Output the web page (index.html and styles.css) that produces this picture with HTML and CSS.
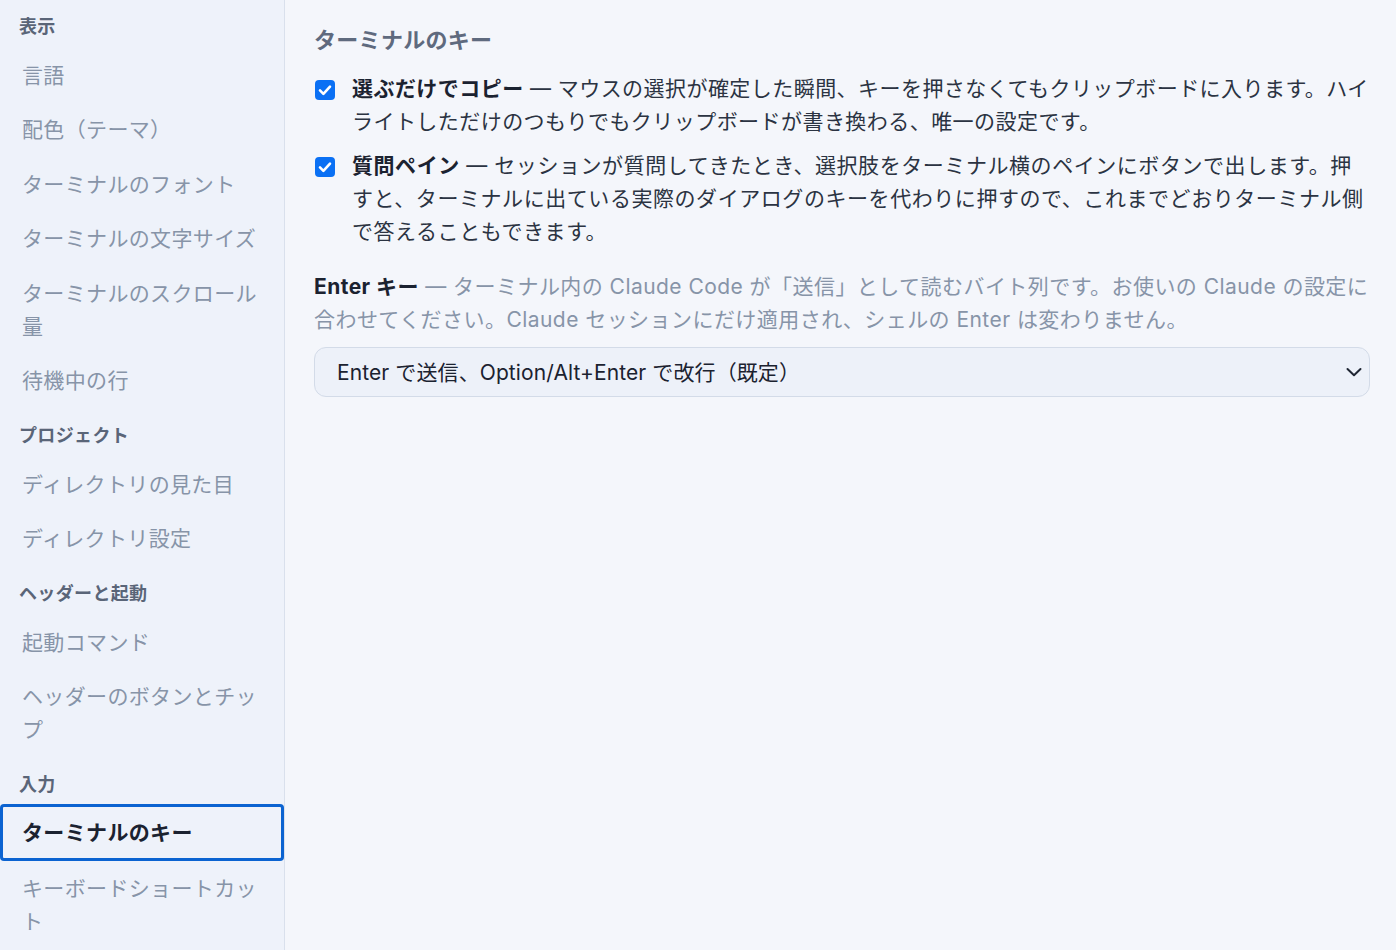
FILE: index.html
```html
<!DOCTYPE html>
<html lang="ja">
<head>
<meta charset="utf-8">
<title>設定</title>
<link rel="stylesheet" href="styles.css">
</head>
<body>
<div class="app">
  <nav class="sidebar">
    <div class="group">表示</div>
    <div class="item">言語</div>
    <div class="item">配色（テーマ）</div>
    <div class="item">ターミナルのフォント</div>
    <div class="item">ターミナルの文字サイズ</div>
    <div class="item">ターミナルのスクロール量</div>
    <div class="item">待機中の行</div>
    <div class="group">プロジェクト</div>
    <div class="item">ディレクトリの見た目</div>
    <div class="item">ディレクトリ設定</div>
    <div class="group">ヘッダーと起動</div>
    <div class="item">起動コマンド</div>
    <div class="item">ヘッダーのボタンとチップ</div>
    <div class="group group-tight">入力</div>
    <div class="item active">ターミナルのキー</div>
    <div class="item">キーボードショートカット</div>
  </nav>
  <main class="main">
    <h2 class="title">ターミナルのキー</h2>
    <div class="opt">
      <span class="check"><svg viewBox="0 0 20 20" width="20" height="20"><rect x="0" y="0" width="20" height="20" rx="4" fill="#0a70f4"/><path d="M5 10.4 L8.4 13.8 L15 6.6" fill="none" stroke="#fff" stroke-width="2.6" stroke-linecap="round" stroke-linejoin="round"/></svg></span>
      <p class="opt-text"><b>選ぶだけでコピー</b> — マウスの選択が確定した瞬間、キーを押さなくてもクリップボードに入ります。ハイライトしただけのつもりでもクリップボードが書き換わる、唯一の設定です。</p>
    </div>
    <div class="opt">
      <span class="check"><svg viewBox="0 0 20 20" width="20" height="20"><rect x="0" y="0" width="20" height="20" rx="4" fill="#0a70f4"/><path d="M5 10.4 L8.4 13.8 L15 6.6" fill="none" stroke="#fff" stroke-width="2.6" stroke-linecap="round" stroke-linejoin="round"/></svg></span>
      <p class="opt-text opt-text-wide"><b>質問ペイン</b> — セッションが質問してきたとき、選択肢をターミナル横のペインにボタンで出します。押すと、ターミナルに出ている実際のダイアログのキーを代わりに押すので、これまでどおりターミナル側で答えることもできます。</p>
    </div>
    <p class="desc"><b>Enter キー</b> — ターミナル内の Claude Code が「送信」として読むバイト列です。お使いの Claude の設定に合わせてください。Claude セッションにだけ適用され、シェルの Enter は変わりません。</p>
    <div class="select">
      <span>Enter で送信、Option/Alt+Enter で改行（既定）</span>
      <svg class="chev" viewBox="0 0 18 18" width="18" height="18"><path d="M2.5 6 L9 12.2 L15.5 6" fill="none" stroke="#1f2633" stroke-width="2" stroke-linecap="round" stroke-linejoin="round"/></svg>
    </div>
  </main>
</div>
</body>
</html>
```
FILE: styles.css
```css
* { box-sizing: border-box; }
html, body { margin: 0; padding: 0; height: 100%; }
body {
  font-family: "Inter", "Noto Sans CJK JP", sans-serif;
  background: #f4f6fb;
  color: #1f2633;
  overflow: hidden;
}
.app {
  display: flex;
  height: 100vh;
}
.sidebar {
  width: 285px;
  flex: 0 0 285px;
  background: #eef2fa;
  border-right: 1px solid #d9e0ec;
  display: flex;
  flex-direction: column;
  letter-spacing: 0.35px;
}
.group {
  font-size: 18px;
  font-weight: 700;
  line-height: 27px;
  color: #5a6578;
  padding: 14px 19px 8px;
}
.group:first-child {
  padding-top: 12.5px;
}
.group-tight {
  padding-bottom: 6.5px;
}
.item {
  font-size: 21px;
  line-height: 33px;
  color: #8794a8;
  padding: 11px 22px 10.5px;
  border-radius: 4px;
}
.item.active {
  color: #1b2230;
  font-weight: 700;
  box-shadow: inset 0 0 0 3px #0b63d1;
  padding: 12px 22px 12px;
}
.main {
  flex: 1;
  padding: 24px 26px 0 29px;
  letter-spacing: 0.45px;
}
.title {
  margin: 0 0 15px;
  font-size: 22px;
  line-height: 33px;
  font-weight: 700;
  color: #5f6a7e;
  letter-spacing: 0.3px;
}
.opt {
  display: flex;
  gap: 17px;
  margin-bottom: 11px;
}
.check {
  flex: 0 0 21px;
  width: 21px;
  padding-top: 8px;
  padding-left: 1px;
}
.check svg { display: block; }
.opt-text {
  margin: 0;
  font-size: 21px;
  line-height: 33px;
  color: #2b3342;
}
.opt-text-wide {
  letter-spacing: 0.56px;
}
.opt-text b, .desc b {
  font-weight: 700;
  color: #1b2230;
}
.desc {
  margin: 22px 0 11px;
  font-size: 21px;
  line-height: 33px;
  color: #8794a8;
}
.select {
  height: 50px;
  border: 1px solid #d3dbe8;
  border-radius: 12px;
  background: #edf1f9;
  display: flex;
  align-items: center;
  justify-content: space-between;
  padding: 0 6px 2px 22px;
  font-size: 21px;
  color: #1b2230;
  letter-spacing: 0.1px;
}
.chev { display: block; margin-top: 2px; }
```
